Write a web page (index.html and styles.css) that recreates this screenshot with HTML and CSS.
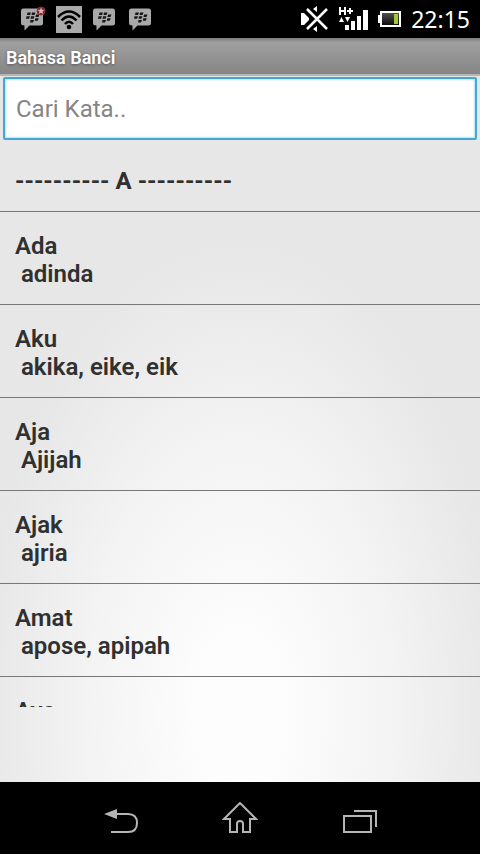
FILE: index.html
```html
<!DOCTYPE html>
<html lang="id">
<head>
<meta charset="utf-8">
<meta name="viewport" content="width=device-width, initial-scale=1">
<title>Bahasa Banci</title>
<link rel="stylesheet" href="styles.css">
</head>
<body>
<svg width="0" height="0" class="defs" aria-hidden="true">
  <symbol id="chat" viewBox="0 0 26 26">
    <path fill="#a9a9a9" d="M3.500 2h17q2.500 0 2.500 2.500v12q0 2.500-2.500 2.500h-11l-5 5v-5q-3.500 0-3.500-2.500v-12q0-2.500 2.500-2.500z"/>
    <path fill="#161616" d="M7.500 6h3.500l-1 2.500h-3zM12 6h3.500l-1 2.500h-3zM6.500 9.800h3.500l-1 2.500h-3zM11 9.800h3.500l-1 2.500h-3zM16 8h3.500l-1 2.500h-3zM10.500 13.500h3.500l-1 2.500h-3zM15.300 11.700h3.500l-1 2.500h-3z"/>
  </symbol>
</svg>
<div class="screen">
  <div class="status">
    <div class="notices">
      <svg class="notice" viewBox="0 0 26 26" role="img" aria-label="Pesan baru"><use href="#chat"/><circle cx="21" cy="4.500" r="4" fill="#7a2227" stroke="#8f3036"/><path fill="#ddb5b5" d="M21 1l1 2.300 2.500.2-2 1.600.7 2.400-2.200-1.300-2.200 1.300.7-2.400-2-1.600 2.500-.2z"/></svg>
      <svg class="notice" viewBox="0 0 26 27" role="img" aria-label="Wi-Fi"><path fill="#aaa" d="M0 0h26v27H0z"/><g fill="none" stroke="#000" stroke-width="2.500"><path d="M2 11Q13 0 24 11M5.500 14.500Q13 6.500 20.500 14.500M9 18Q13 13.500 17 18"/></g><circle cx="13" cy="21" r="2.300"/></svg>
      <svg class="notice" viewBox="0 0 26 26" role="img" aria-label="Pesan"><use href="#chat"/></svg>
      <svg class="notice" viewBox="0 0 26 26" role="img" aria-label="Pesan"><use href="#chat"/></svg>
    </div>
    <div class="system">
      <svg class="mute" viewBox="0 0 27 26" role="img" aria-label="Senyap"><path fill="#fff" d="M0 7h3l5 5v2l-5 5H0zM12 3l4-3v6zM12 23l4 3v-6z"/><path d="M6 3l20 20M26 3L6 23" stroke="#fff" stroke-width="2.500"/></svg>
      <svg class="signal" viewBox="0 0 30 25" role="img" aria-label="Sinyal H+"><path d="M2 0v8M7 0v8M2 4h5M9 4h6M12 1v6" stroke="#fff" stroke-width="2" fill="none"/><path fill="#fff" d="M1 15l2.500-5 2.500 5zM7 10h5l-2.500 5zM7 18h4v5H7zM13 14h4v9h-4zM19 9h4v14h-4zM25 3h5v20h-5z"/></svg>
      <svg class="battery" viewBox="0 0 23 16" role="img" aria-label="Baterai"><defs><linearGradient id="cell" x1="0" y1="0" x2="0" y2="1"><stop stop-color="#555"/><stop offset="1" stop-color="#080808"/></linearGradient></defs><path fill="#fff" d="M0 4h2v8H0z"/><path fill="url(#cell)" stroke="#fff" stroke-width="2" d="M3 1h19v14H3z"/><path fill="#a3c832" d="M16 3h4v10h-4z"/></svg>
      <time class="clock">22:15</time>
    </div>
  </div>
  <header class="title-bar"><h1>Bahasa Banci</h1></header>
  <main>
    <input class="search" type="text" placeholder="Cari Kata.." aria-label="Cari Kata">
    <ul class="words">
      <li class="letter">---------- A ----------</li>
      <li><span>Ada</span><span> adinda</span></li>
      <li><span>Aku</span><span> akika, eike, eik</span></li>
      <li><span>Aja</span><span> Ajijah</span></li>
      <li><span>Ajak</span><span> ajria</span></li>
      <li><span>Amat</span><span> apose, apipah</span></li>
      <li><span>Ayo</span></li>
    </ul>
  </main>
  <nav class="navigation" aria-label="Navigasi">
    <button aria-label="Kembali"><svg viewBox="0 0 36 32"><path class="arrow" d="M2 12l13-5v10z"/><path d="M14 12h12q9 0 9 9t-9 9H9"/></svg></button>
    <button aria-label="Beranda"><svg viewBox="0 0 36 32"><path d="M18 1L2 17h6v13h7v-8q0-3 3-3t3 3v8h7V17h6z"/></svg></button>
    <button aria-label="Aplikasi terbaru"><svg viewBox="0 0 36 32"><path d="M2 14h27v16H2zM12 9h22v16"/></svg></button>
  </nav>
</div>
</body>
</html>
```
FILE: styles.css
```css
* { box-sizing: border-box; }
body {
  margin: 0;
  font-family: Roboto, "Noto Sans", sans-serif;
  color: #303030;
}
.defs { position: absolute; }
.screen {
  height: 100vh;
  display: flex;
  flex-direction: column;
}
.status {
  flex: 0 0 38px;
  padding: 0 10px 0 20px;
  display: flex;
  align-items: center;
  justify-content: space-between;
  background: #000;
  color: #fff;
}
.notices { display: flex; gap: 10px; }
.notice { width: 26px; height: 27px; }
.system { display: flex; align-items: center; gap: 10px; }
.mute { width: 27px; height: 26px; }
.signal { width: 30px; height: 25px; }
.battery { width: 23px; height: 16px; }
.clock {
  font-family: "Noto Sans", sans-serif;
  font-size: 23px;
  line-height: 38px;
}
.title-bar {
  flex: 0 0 38px;
  padding: 2px 6px 0;
  display: flex;
  align-items: center;
  background: linear-gradient(#7c7c7c, #a0a0a0 12%, #858585 94%, #b5b5b5 95%);
}
h1 {
  margin: 0;
  font-size: 18px;
  line-height: 20px;
  font-weight: 600;
  color: #fff;
  text-shadow: 0 1px 3px #555;
}
main {
  flex: 1;
  min-height: 0;
  padding: 1px 0 75px;
  display: flex;
  flex-direction: column;
  background: radial-gradient(ellipse 54% 66% at 50% 90%, #fdfdfd 15%, #f3f3f3 60%, #e7e7e7);
}
.search {
  flex: 0 0 63px;
  margin: 0 3px 10px;
  padding: 0 11px;
  border: 2px solid #43a7d1;
  border-radius: 2px;
  box-shadow: inset 0 0 2px 1px #b5e4f5;
  background: #fff;
  outline: 0;
  font: 24px Roboto, sans-serif;
  color: #303030;
}
.search::placeholder { color: #858585; opacity: 1; }
.words {
  flex: 1;
  min-height: 0;
  overflow: hidden;
  margin: 0;
  padding: 0;
  list-style: none;
  font-size: 24px;
  line-height: 28px;
  font-weight: 600;
}
.words li {
  height: 93px;
  padding: 20px 15px 0;
  border-bottom: 1px solid #777;
}
.words .letter { height: 62px; padding-top: 17px; font-weight: 700; }
.words span { display: block; white-space: pre; }
.navigation {
  flex: 0 0 72px;
  padding: 0 60px;
  display: flex;
  background: #000;
}
.navigation button {
  flex: 1;
  padding: 0;
  border: 0;
  background: transparent;
  display: flex;
  align-items: center;
  justify-content: center;
}
.navigation svg {
  width: 36px;
  height: 32px;
  fill: none;
  stroke: #b5b5b5;
  stroke-width: 2;
}
.navigation .arrow { fill: #b5b5b5; stroke: none; }
```
